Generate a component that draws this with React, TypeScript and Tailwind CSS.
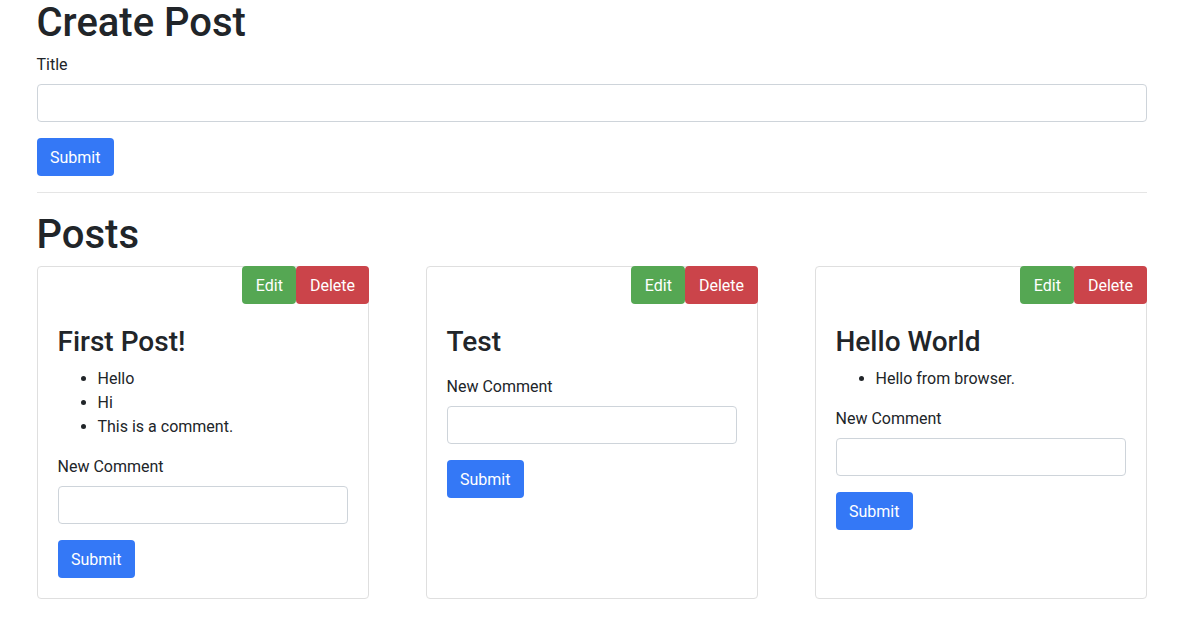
import { useState } from "react"

type Post = { id: number; title: string; comments: string[] }

const initialPosts: Post[] = [
  { id: 1, title: "First Post!", comments: ["Hello", "Hi", "This is a comment."] },
  { id: 2, title: "Test", comments: [] },
  { id: 3, title: "Hello World", comments: ["Hello from browser."] },
]

function PostCard({ post }: { post: Post }) {
  const [comment, setComment] = useState("")

  return (
    <div className="w-[332px] border border-[#dfdfdf] rounded bg-white flex flex-col">
      <div className="flex justify-end -mt-px -mr-px">
        <button className="h-[38px] px-[13.5px] pt-[2px] text-white bg-[#55a753] rounded">Edit</button>
        <button className="h-[38px] px-[13.5px] pt-[2px] text-white bg-[#cb444a] rounded">Delete</button>
      </div>
      <div className="px-5 pt-5 pb-5">
        <h3 className="text-[28px] leading-[1.2] font-medium pt-px mb-[7px]">{post.title}</h3>
        {post.comments.length > 0 && (
          <ul className="list-disc pl-10 mb-4">
            {post.comments.map((c, i) => (
              <li key={i} className="leading-6 pt-px -mb-px">{c}</li>
            ))}
          </ul>
        )}
        <div className={post.comments.length > 0 ? "" : "mt-[15px]"}>
          <label className="inline-block leading-6 pt-px mb-[7px]">New Comment</label>
          <input
            value={comment}
            onChange={(e) => setComment(e.target.value)}
            className="block w-full h-[38px] border border-[#ced4da] rounded px-3 mb-4"
          />
          <button className="h-[38px] px-[13.5px] pt-[2px] text-white bg-[#3478f6] rounded">Submit</button>
        </div>
      </div>
    </div>
  )
}

export default function App() {
  const [title, setTitle] = useState("")

  return (
    <div className="min-h-screen bg-white text-[#212529] text-base leading-6 font-['Roboto',sans-serif]">
      <div className="max-w-[1140px] mx-auto pl-[14px] pr-[16px]">
        <h1 className="text-[40px] leading-[46px] font-medium mb-[6px]">Create Post</h1>
        <form onSubmit={(e) => e.preventDefault()}>
          <div className="mb-4">
            <label className="inline-block leading-6 pt-px mb-[7px]">Title</label>
            <input
              value={title}
              onChange={(e) => setTitle(e.target.value)}
              className="block w-full h-[38px] border border-[#ced4da] rounded px-3"
            />
          </div>
          <button className="h-[38px] px-[13.5px] pt-[2px] text-white bg-[#3478f6] rounded">Submit</button>
        </form>
        <hr className="my-4 border-t border-[#e5e5e5]" />
        <h1 className="text-[40px] leading-[1.2] font-medium pt-[2px] mb-[7px]">Posts</h1>
        <div className="flex justify-between items-stretch">
          {initialPosts.map((p) => (
            <PostCard key={p.id} post={p} />
          ))}
        </div>
      </div>
    </div>
  )
}
